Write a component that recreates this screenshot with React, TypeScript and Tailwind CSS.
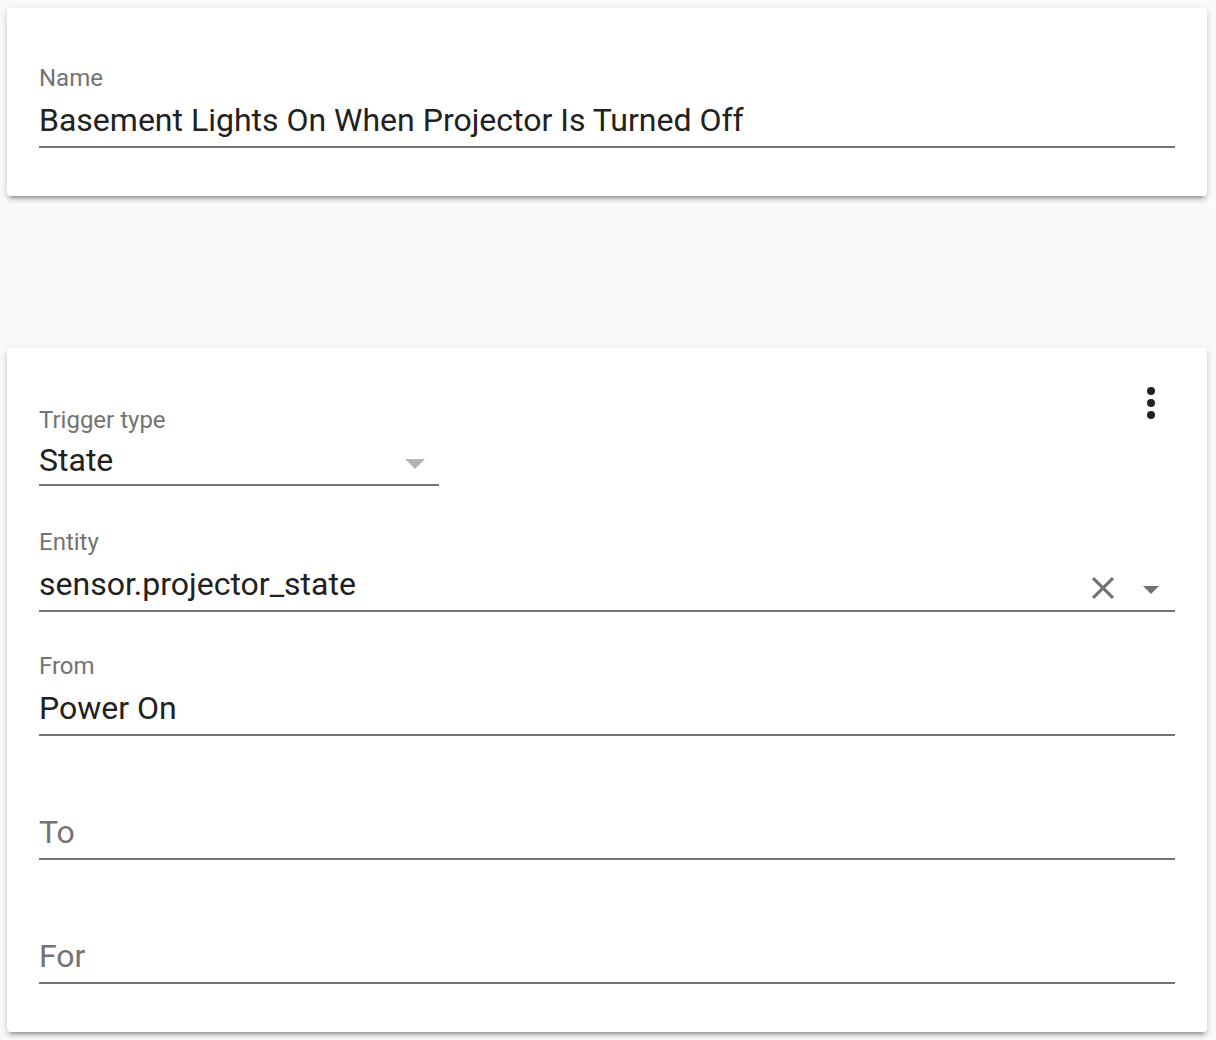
type FieldProps = {
  label?: string;
  value?: string;
  placeholder?: string;
  className?: string;
  dropdown?: boolean;
  children?: React.ReactNode;
};

function Field({ label, value, placeholder, className = "", dropdown = false, children }: FieldProps) {
  return (
    <div className={className}>
      <div
        className={`text-[24px] leading-[30px] text-[#737373] h-[30px] box-content ${dropdown ? "pt-[4px]" : ""}`}
      >
        {label}
      </div>
      <div
        className={`flex items-start border-b-2 border-[#737373] ${dropdown ? "mt-[5px] pb-[4px]" : "mt-[7px] pb-[6px]"}`}
      >
        <div className="flex-1 min-w-0 text-[32px] leading-[40px] truncate">
          {value ? (
            <span className="text-[#212121]">{value}</span>
          ) : (
            <span className="text-[#737373]">{placeholder}</span>
          )}
        </div>
        {children}
      </div>
    </div>
  );
}

function DropArrow({ color = "#737373", top = 21, w = 20, h = 10 }: { color?: string; top?: number; w?: number; h?: number }) {
  return (
    <div className="w-12 h-10 flex justify-center">
      <svg width={w} height={h} viewBox="0 0 20 10" style={{ marginTop: top }}>
        <path d="M0 0 L10 10 L20 0 Z" fill={color} />
      </svg>
    </div>
  );
}

function ClearIcon() {
  return (
    <div className="w-12 h-10 flex justify-center">
      <svg width="38" height="38" viewBox="0 0 24 24" className="mt-[5px] -mb-[3px]">
        <path
          d="M19,6.41L17.59,5L12,10.59L6.41,5L5,6.41L10.59,12L5,17.59L6.41,19L12,13.41L17.59,19L19,17.59L13.41,12L19,6.41Z"
          fill="#737373"
        />
      </svg>
    </div>
  );
}

function MenuDots() {
  return (
    <svg width="48" height="48" viewBox="0 0 24 24" className="-mt-[22px] shrink-0">
      <circle cx="12" cy="6" r="2" fill="#212121" />
      <circle cx="12" cy="12" r="2" fill="#212121" />
      <circle cx="12" cy="18" r="2" fill="#212121" />
    </svg>
  );
}

const card =
  "bg-white rounded px-8 shadow-[0_4px_4px_0_rgba(0,0,0,0.14),0_2px_10px_0_rgba(0,0,0,0.12),0_6px_2px_-4px_rgba(0,0,0,0.2)]";

export default function App() {
  return (
    <div
      className="min-h-[1040px] bg-[#fafafa] pl-[7px] pr-[9px] pt-[8px] pb-[8px]"
      style={{ fontFamily: "Roboto, 'Noto Sans', Arial, sans-serif" }}
    >
      <div className={`${card} pt-[55px] pb-[48px]`}>
        <Field label="Name" value="Basement Lights On When Projector Is Turned Off" />
      </div>

      <div className={`${card} mt-[152px] pt-[53px] pb-[48px]`}>
        <div className="flex items-start">
          <Field label="Trigger type" value="State" className="w-[400px]" dropdown>
            <DropArrow color="#b3b3b3" top={19} />
          </Field>
          <div className="ml-auto">
            <MenuDots />
          </div>
        </div>
        <Field label="Entity" value="sensor.projector_state" className="mt-[41px]">
          <ClearIcon />
          <DropArrow top={22} w={18} h={8} />
        </Field>
        <Field label="From" value="Power On" className="mt-[39px]" />
        <Field placeholder="To" className="mt-[39px]" />
        <Field placeholder="For" className="mt-[39px]" />
      </div>
    </div>
  );
}
